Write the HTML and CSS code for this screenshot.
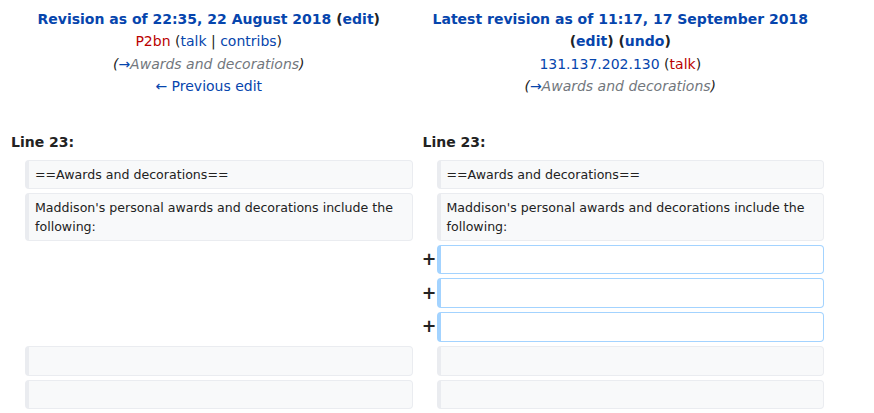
FILE: index.html
```html
<!DOCTYPE html>
<html lang="en">
<head>
<meta charset="utf-8">
<title>Diff</title>
<link rel="stylesheet" href="styles.css">
</head>
<body>
<div class="diff">
  <div class="title">
    <div><strong><a class="link">Revision as of 22:35, 22 August 2018</a> <span>(<a class="link">edit</a>)</span></strong></div>
    <div><a class="new">P2bn</a> (<a class="link">talk</a> | <a class="link">contribs</a>)</div>
    <div class="comment">(<a class="link">→</a><span class="auto">Awards and decorations</span>)</div>
    <div><a class="link">← Previous edit</a></div>
  </div>
  <div class="title">
    <div><strong><a class="link">Latest revision as of 11:17, 17 September 2018</a> <span>(<a class="link">edit</a>)</span> <span>(<a class="link">undo</a>)</span></strong></div>
    <div><a class="link">131.137.202.130</a> (<a class="new">talk</a>)</div>
    <div class="comment">(<a class="link">→</a><span class="auto">Awards and decorations</span>)</div>
  </div>

  <div class="lineno">Line 23:</div>
  <div class="lineno">Line 23:</div>

  <div class="marker"></div><div class="ctx">==Awards and decorations==</div>
  <div class="marker"></div><div class="ctx">==Awards and decorations==</div>

  <div class="marker"></div><div class="ctx">Maddison's personal awards and decorations include the following:</div>
  <div class="marker"></div><div class="ctx">Maddison's personal awards and decorations include the following:</div>

  <div class="blank"></div><div class="marker"><span class="plus">+</span></div><div class="add"></div>
  <div class="blank"></div><div class="marker"><span class="plus">+</span></div><div class="add"></div>
  <div class="blank"></div><div class="marker"><span class="plus">+</span></div><div class="add"></div>

  <div class="marker"></div><div class="ctx empty"></div>
  <div class="marker"></div><div class="ctx empty"></div>

  <div class="marker"></div><div class="ctx empty"></div>
  <div class="marker"></div><div class="ctx empty"></div>
</div>
</body>
</html>
```
FILE: styles.css
```css
html, body {
  margin: 0;
  padding: 0;
  background: #fff;
}

body {
  font-family: "DejaVu Sans", sans-serif;
  font-size: 14px;
  color: #222;
}

.diff {
  display: grid;
  grid-template-columns: 16px 1fr 16px 1fr;
  column-gap: 4px;
  row-gap: 4px;
  padding: 8px 50px 0 5px;
}

.title {
  grid-column: span 2;
  text-align: center;
  line-height: 22.4px;
}

.link {
  color: #0645ad;
  text-decoration: none;
}

.new {
  color: #ba0000;
  text-decoration: none;
}

.comment {
  font-style: italic;
  color: #222;
}

.comment .auto {
  color: #72777d;
}

.lineno {
  grid-column: span 2;
  font-weight: bold;
  line-height: 22.4px;
  padding: 4px 6px 3px;
  margin-top: 25px;
}

.marker {
  display: flex;
  align-items: center;
  justify-content: flex-end;
}

.plus {
  font-weight: bold;
  font-size: 17.5px;
  line-height: 21px;
  margin-right: -4px;
  color: #222;
}

.blank {
  grid-column: span 2;
}

.ctx,
.add {
  border-style: solid;
  border-width: 1px 1px 1px 4px;
  border-radius: 4px;
  font-size: 12.6px;
  line-height: 19px;
  padding: 4px 6px 3.75px;
  white-space: pre-wrap;
  word-wrap: break-word;
}

.ctx {
  background: #f8f9fa;
  border-color: #eaecf0;
  color: #222;
}

.add {
  background: #fff;
  border-color: #a3d3ff;
  height: 29.75px;
  box-sizing: border-box;
}

.ctx.empty {
  height: 29.75px;
  box-sizing: border-box;
}
```
